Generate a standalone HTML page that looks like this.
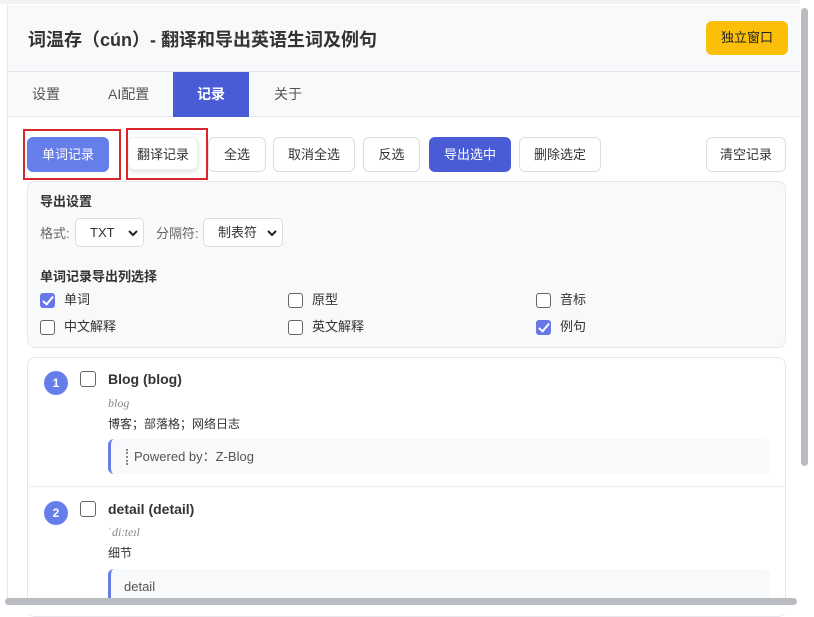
<!DOCTYPE html>
<html><head><meta charset="utf-8"><style>
*{box-sizing:border-box;margin:0;padding:0}
body{width:814px;height:614px;overflow:hidden;background:#fff;font-family:"Liberation Sans","Noto Sans CJK SC",sans-serif;color:#333;position:relative}
.panel{position:absolute;left:7px;top:5px;width:793px;height:600px;background:#fff;border-left:1px solid #e5e7eb;overflow:hidden}
.header{height:67px;background:#f8f9fa;border-bottom:1px solid #e5e7eb;position:relative}
.header h1{position:absolute;left:20px;top:23px;font-size:18px;line-height:24px;font-weight:bold;color:#333}
.win{position:absolute;left:698px;top:16px;width:82px;height:34px;background:#fbbf0a;border-radius:6px;font-size:13px;text-align:center;line-height:34px;color:#222}
.tabs{height:45px;background:#f8f9fa;border-bottom:1px solid #e5e7eb;position:relative}
.tab{position:absolute;top:0;height:45px;line-height:45px;font-size:14px;color:#555}
.tab.on{background:#4a5bd6;color:#fff;font-weight:bold;width:76px;text-align:center}
.btn{position:absolute;top:137px;height:35px;border:1px solid #ddd;border-radius:6px;background:#fff;font-size:13px;text-align:center;line-height:33px;color:#333}
.red{position:absolute;border:2px solid #d9262c}
.box{position:absolute;left:27px;width:759px;border:1px solid #e5e7eb;border-radius:8px}
.lbl{position:absolute;font-size:13px;line-height:16px;color:#333;white-space:nowrap}
.sel{position:absolute;top:218px;height:29px;border:1px solid #ddd;border-radius:5px;background:#fff;font-size:13px;line-height:27px;padding-left:14px}
.sel svg{position:absolute;right:5px;top:10px}
.cb{position:absolute;width:15px;height:15px;border:1.5px solid #666;border-radius:3px;background:#fff}
.cb.on{background:#6677e8;border-color:#6677e8}
.cb.on:after{content:"";position:absolute;left:4px;top:0px;width:4px;height:9px;border:solid #fff;border-width:0 2px 2px 0;transform:rotate(40deg)}
.num{position:absolute;width:24px;height:24px;border-radius:50%;background:#667eea;color:#fff;font-size:12px;font-weight:bold;text-align:center;line-height:24px}
.ex{position:absolute;left:108px;width:662px;height:35px;background:#f8f9fa;border-left:3px solid #667eea;border-radius:6px;font-size:13px;color:#555;line-height:35px;padding-left:23px}
</style></head><body>
<div style="position:absolute;left:0;top:0;width:814px;height:4px;background:#f1f3f4"></div>
<div class="panel">
<div class="header"><h1>词温存（cún）- 翻译和导出英语生词及例句</h1><div class="win">独立窗口</div></div>
<div class="tabs">
<div class="tab" style="left:24px">设置</div>
<div class="tab" style="left:100px">AI配置</div>
<div class="tab on" style="left:165px">记录</div>
<div class="tab" style="left:266px">关于</div>
</div>
</div>
<div class="btn" style="left:27px;width:82px;background:#667eea;border-color:#667eea;color:#fff">单词记录</div>
<div class="btn" style="left:128px;top:137px;height:33px;width:70px;border-color:#eee;box-shadow:0 2px 5px rgba(0,0,0,.12)">翻译记录</div>
<div class="red" style="left:23px;top:129px;width:98px;height:51px"></div>
<div class="red" style="left:126px;top:128px;width:82px;height:52px"></div>
<div class="btn" style="left:208px;width:58px">全选</div>
<div class="btn" style="left:273px;width:82px">取消全选</div>
<div class="btn" style="left:363px;width:57px">反选</div>
<div class="btn" style="left:429px;width:82px;background:#4a5bd6;border-color:#4a5bd6;color:#fff">导出选中</div>
<div class="btn" style="left:519px;width:82px">删除选定</div>
<div class="btn" style="left:706px;width:80px">清空记录</div>
<div class="box" style="top:181px;height:167px;background:#f8f9fa"></div>
<div class="lbl" style="left:40px;top:194px;font-weight:bold">导出设置</div>
<div class="lbl" style="left:40px;top:226px;color:#666">格式:</div>
<div class="sel" style="left:75px;width:69px">TXT<svg width="10" height="8" viewBox="0 0 10 8"><path d="M1 2 L5 6 L9 2" stroke="#222" stroke-width="2" fill="none"/></svg></div>
<div class="lbl" style="left:156px;top:226px;color:#666">分隔符:</div>
<div class="sel" style="left:203px;width:80px">制表符<svg width="10" height="8" viewBox="0 0 10 8"><path d="M1 2 L5 6 L9 2" stroke="#222" stroke-width="2" fill="none"/></svg></div>
<div class="lbl" style="left:40px;top:269px;font-weight:bold">单词记录导出列选择</div>
<div class="cb on" style="left:40px;top:293px"></div><div class="lbl" style="left:64px;top:292px">单词</div>
<div class="cb" style="left:288px;top:293px"></div><div class="lbl" style="left:312px;top:292px">原型</div>
<div class="cb" style="left:536px;top:293px"></div><div class="lbl" style="left:560px;top:292px">音标</div>
<div class="cb" style="left:40px;top:320px"></div><div class="lbl" style="left:64px;top:319px">中文解释</div>
<div class="cb" style="left:288px;top:320px"></div><div class="lbl" style="left:312px;top:319px">英文解释</div>
<div class="cb on" style="left:536px;top:320px"></div><div class="lbl" style="left:560px;top:319px">例句</div>
<div class="box" style="top:357px;height:260px;background:#fff"></div>
<div style="position:absolute;left:28px;top:486px;width:757px;height:1px;background:#eee"></div>
<div class="num" style="left:44px;top:371px">1</div>
<div class="cb" style="left:80px;top:371px;width:16px;height:16px"></div>
<div class="lbl" style="left:108px;top:371px;font-size:14px;font-weight:bold">Blog (blog)</div>
<div class="lbl" style="left:108px;top:395px;font-size:12px;color:#888;font-style:italic;font-family:'Liberation Serif',serif">blog</div>
<div class="lbl" style="left:108px;top:416px;font-size:12px">博客；部落格；网络日志</div>
<div class="ex" style="top:439px">Powered by：Z-Blog<span style="position:absolute;left:15px;top:10px;height:16px;border-left:2px dotted #888"></span></div>
<div class="num" style="left:44px;top:501px">2</div>
<div class="cb" style="left:80px;top:501px;width:16px;height:16px"></div>
<div class="lbl" style="left:108px;top:501px;font-size:14px;font-weight:bold">detail (detail)</div>
<div class="lbl" style="left:108px;top:524px;font-size:12px;color:#888;font-style:italic;font-family:'Liberation Serif',serif">ˈdiːteɪl</div>
<div class="lbl" style="left:108px;top:545px;font-size:12px">细节</div>
<div class="ex" style="top:569px;padding-left:13px">detail</div>
<div style="position:absolute;left:800px;top:0;width:14px;height:614px;background:#fff"></div>
<div style="position:absolute;left:801px;top:8px;width:7px;height:458px;background:#b9bcc0;border-radius:4px"></div>
<div style="position:absolute;left:0;top:605px;width:814px;height:9px;background:#fff"></div>
<div style="position:absolute;left:5px;top:598px;width:792px;height:7px;background:#b9bcc0;border-radius:4px"></div>
</body></html>
